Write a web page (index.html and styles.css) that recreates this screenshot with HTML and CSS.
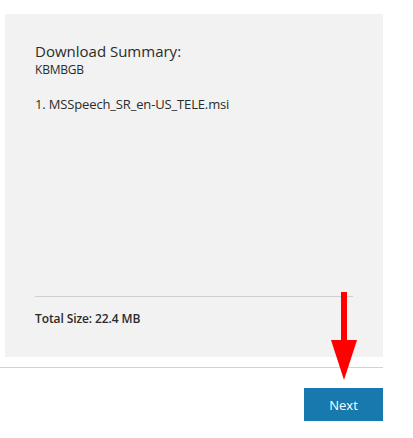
FILE: index.html
```html
<!DOCTYPE html>
<html>
<head>
<meta charset="utf-8">
<link rel="stylesheet" href="styles.css">
</head>
<body>
<div class="page">
  <div class="panel">
    <div class="summary">
      <h2 class="title">Download Summary:</h2>
      <div class="code">KBMBGB</div>
      <ol class="files">
        <li>1. MSSpeech_SR_en-US_TELE.msi</li>
      </ol>
    </div>
    <div class="total">Total Size: 22.4 MB</div>
  </div>
  <div class="footer">
    <button class="next">Next</button>
  </div>
  <svg class="arrow" width="30" height="92" viewBox="0 0 30 92">
    <rect x="10" y="0" width="6" height="50" fill="#ff0000"/>
    <polygon points="0,48 26,48 13,88" fill="#ff0000"/>
  </svg>
</div>
</body>
</html>
```
FILE: styles.css
```css
html, body {
  margin: 0;
  padding: 0;
  background: #ffffff;
}
.page {
  position: relative;
  width: 383px;
  padding-top: 14px;
  font-family: "Open Sans", "Noto Sans", sans-serif;
  color: #333333;
}
.panel {
  margin-left: 5px;
  height: 343px;
  background: #f2f2f2;
  box-sizing: border-box;
  padding: 27px 30px 0 30px;
  display: flex;
  flex-direction: column;
}
.summary {
  flex: 1;
}
.title {
  margin: 0;
  font-size: 15px;
  font-weight: 400;
  line-height: 21px;
  color: #2b2b2b;
}
.code {
  font-size: 12px;
  line-height: 16px;
  color: #2b2b2b;
  letter-spacing: -0.2px;
}
.files {
  list-style: none;
  margin: 17px 0 0 0;
  padding: 0;
  font-size: 13px;
  line-height: 18px;
  color: #2b2b2b;
  letter-spacing: -0.15px;
}
.total {
  border-top: 1px solid #cfcfcf;
  height: 61px;
  box-sizing: border-box;
  padding-top: 13px;
  font-size: 12px;
  font-weight: 600;
  line-height: 17px;
  color: #2b2b2b;
  letter-spacing: -0.1px;
}
.footer {
  margin-top: 10px;
  border-top: 1px solid #d2d2d2;
  padding-top: 20px;
  display: flex;
  justify-content: flex-end;
}
.next {
  width: 79px;
  height: 33px;
  border: none;
  background: #1779ae;
  color: #ffffff;
  font-family: "Open Sans", "Noto Sans", sans-serif;
  font-size: 13px;
  padding: 0;
  cursor: pointer;
}
.arrow {
  position: absolute;
  left: 331px;
  top: 292px;
}
```
